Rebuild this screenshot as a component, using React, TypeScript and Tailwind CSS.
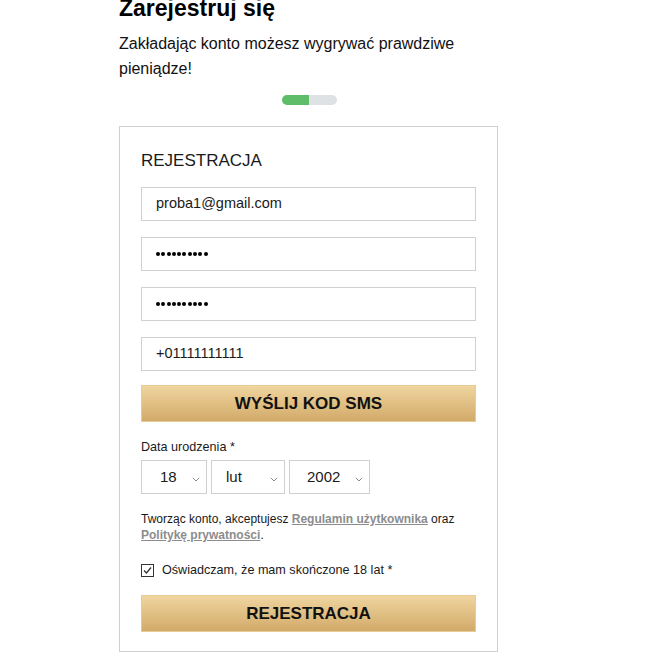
import React from "react";

const Chevron = () => (
  <svg width="8" height="5" viewBox="0 0 8 5" className="absolute right-[6px] top-[16px]">
    <path d="M0.8 0.8 L4 4 L7.2 0.8" fill="none" stroke="#8a8a8a" strokeWidth="1" />
  </svg>
);

const Select = ({ w, value, pl }: { w: string; value: string; pl: string }) => (
  <div className={`relative h-[34px] ${w} border border-[#d0d0d0] bg-white`}>
    <span className={`absolute top-[7px] ${pl} text-[15px] leading-[18px] text-[#1a1a1a]`}>{value}</span>
    <Chevron />
  </div>
);

const Input = ({ children }: { children: React.ReactNode }) => (
  <div className="h-[34px] w-full border border-[#d0d0d0] bg-white flex items-center pl-[14px] text-[14.5px] text-[#1a1a1a]">
    {children}
  </div>
);

const Dots = () => (
  <div className="flex gap-[1.3px]">
    {Array.from({ length: 10 }).map((_, i) => (
      <span key={i} className="block w-[4px] h-[4px] rounded-full bg-black" />
    ))}
  </div>
);

export default function App() {
  return (
    <div className="min-h-[664px] w-[647px] bg-white font-['Liberation_Sans',Arial,sans-serif] text-[#111]">
      <div className="ml-[119px] w-[380px]">
        <h1 className="-mt-[6px] text-[23px] leading-[28px] font-bold text-black">Zarejestruj się</h1>
        <p className="mt-[9px] text-[16px] leading-[25px] text-[#111] w-[378px]">
          Zakładając konto możesz wygrywać prawdziwe pieniądze!
        </p>
        <div className="mt-[14px] flex justify-center">
          <div className="flex h-[10px] w-[55px] overflow-hidden rounded-full">
            <div className="w-[27px] bg-[#5dbd69]" />
            <div className="flex-1 bg-[#dfe2e5]" />
          </div>
        </div>
        <div className="mt-[21px] w-[379px] border border-[#cfcfcf] px-[21px] pt-[24px] pb-[19px]">
          <div className="text-[17px] leading-[20px] text-[#1a1a1a]">REJESTRACJA</div>
          <div className="mt-[16px] flex flex-col gap-[16px]">
            <Input>proba1@gmail.com</Input>
            <Input>
              <Dots />
            </Input>
            <Input>
              <Dots />
            </Input>
            <Input>+01111111111</Input>
          </div>
          <button className="mt-[14px] h-[37px] w-full bg-gradient-to-b from-[#efd59f] to-[#d2aa69] text-[17px] font-bold text-[#111] border border-[#e6cc94]">
            WYŚLIJ KOD SMS
          </button>
          <div className="mt-[17px] text-[12.6px] leading-[16px] text-[#1a1a1a]">Data urodzenia *</div>
          <div className="mt-[5px] flex gap-[4px]">
            <Select w="w-[66px]" value="18" pl="left-[18px]" />
            <Select w="w-[74px]" value="lut" pl="left-[14px]" />
            <Select w="w-[81px]" value="2002" pl="left-[17px]" />
          </div>
          <p className="mt-[17px] text-[12px] leading-[16px] text-[#1a1a1a]">
            Tworząc konto, akceptujesz{" "}
            <span className="font-bold text-[#8c8c8c] underline">Regulamin użytkownika</span> oraz{" "}
            <span className="font-bold text-[#8c8c8c] underline">Politykę prywatności</span>.
          </p>
          <div className="mt-[19px] flex items-center gap-[8px]">
            <div className="flex h-[13px] w-[13px] items-center justify-center border border-[#333] bg-white">
              <svg width="11" height="11" viewBox="0 0 11 11">
                <path d="M2 5.5 L4.5 8 L9 2.5" fill="none" stroke="#333" strokeWidth="1.3" />
              </svg>
            </div>
            <span className="text-[12.6px] leading-[16px] text-[#1a1a1a]">Oświadczam, że mam skończone 18 lat *</span>
          </div>
          <button className="mt-[17px] h-[37px] w-full bg-gradient-to-b from-[#efd59f] to-[#d2aa69] text-[17px] font-bold text-[#111] border border-[#e6cc94]">
            REJESTRACJA
          </button>
        </div>
      </div>
    </div>
  );
}
